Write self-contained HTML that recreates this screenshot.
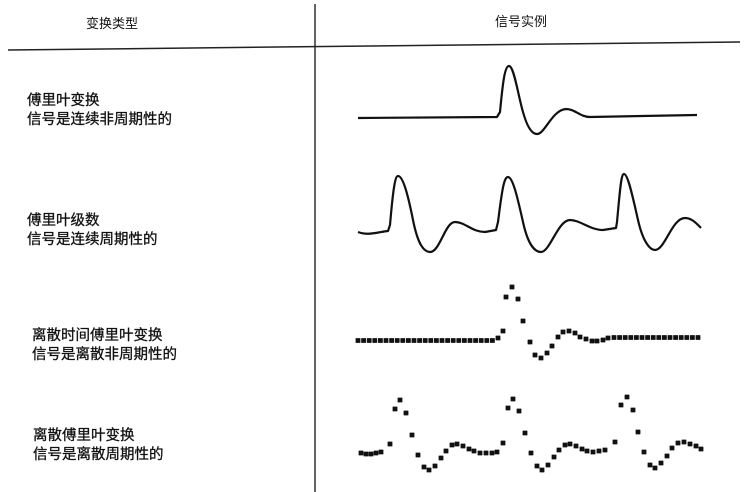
<!DOCTYPE html>
<html><head><meta charset="utf-8"><style>
body{margin:0;background:#fff;width:749px;height:492px;overflow:hidden}
svg{display:block}
text{font-family:"Liberation Sans","Noto Sans CJK SC",sans-serif;font-size:14.5px;fill:#111;stroke:#111;stroke-width:0.3}
</style></head><body>
<svg width="749" height="492" viewBox="0 0 749 492">
<line x1="315" y1="4" x2="315" y2="492" stroke="#222" stroke-width="1.4"/>
<line x1="8" y1="50" x2="740" y2="42" stroke="#222" stroke-width="1.5"/>
<text x="86" y="28" style="font-size:13px;stroke-width:0">变换类型</text>
<text x="495" y="26" style="font-size:13px;stroke-width:0">信号实例</text>
<text x="27" y="105">傅里叶变换</text>
<text x="27" y="124">信号是连续非周期性的</text>
<text x="27" y="225">傅里叶级数</text>
<text x="27" y="244">信号是连续周期性的</text>
<text x="32" y="340">离散时间傅里叶变换</text>
<text x="32" y="359">信号是离散非周期性的</text>
<text x="33" y="440">离散傅里叶变换</text>
<text x="33" y="459">信号是离散周期性的</text>
<g fill="none" stroke="#111" stroke-width="2.2" stroke-linejoin="round">
<path d="M358 118 L497 117 L500 112 C503 80 505 66 509 66 C514 66 518 95 523 112 C528 130 533 134 537 134 C545 134 552 110 566 109 C575 109 580 117 590 117 L697 115"/>
<path d="M358 232 C368 236 378 232 388 231 L390 225 C393 190 395 176 398 176 C403 176 408 195 413 220 C418 245 424 252 430 252 C440 252 445 222 455 222 C465 222 472 232 485 232 L496 230 L498 222 C502 190 504 177 508 177 C513 177 518 200 523 222 C528 245 535 252 541 252 C550 252 558 220 570 220 C580 220 590 230 603 230 L616 228 L617 222 C620 190 621 174 624 174 C628 174 633 198 638 220 C643 242 650 250 655 250 C665 250 672 218 685 218 C692 218 697 224 701 228"/>
</g>
<path fill="#111" stroke="#111" stroke-width="0.8" stroke-linejoin="round" d="
M356 338.5h4v4h-4z M361.6 338.5h4v4h-4z M367.2 338.5h4v4h-4z M372.8 338.5h4v4h-4z M378.4 338.5h4v4h-4z M384 338.5h4v4h-4z M389.6 338.5h4v4h-4z M395.2 338.5h4v4h-4z M400.8 338.5h4v4h-4z M406.4 338.5h4v4h-4z M412 338.5h4v4h-4z M417.6 338.5h4v4h-4z M423.2 338.5h4v4h-4z M428.8 338.5h4v4h-4z M434.4 338.5h4v4h-4z M440 338.5h4v4h-4z M445.6 338.5h4v4h-4z M451.2 338.5h4v4h-4z M456.8 338.5h4v4h-4z M462.4 338.5h4v4h-4z M468 338.5h4v4h-4z M473.6 338.5h4v4h-4z M479.2 338.5h4v4h-4z M484.8 338.5h4v4h-4z M490.4 338.5h4v4h-4z
M496 336h4v4h-4z M501 329h4v4h-4z M504 295h4v4h-4z M510 285h4v4h-4z M516 297h4v4h-4z M521 319h4v4h-4z M528 340h4v4h-4z M533 353h4v4h-4z M539 356h4v4h-4z M545 351h4v4h-4z M550 344h4v4h-4z M556 335h4v4h-4z M561 330h4v4h-4z M567 329h4v4h-4z M573 331h4v4h-4z M578 335h4v4h-4z M584 337h4v4h-4z M590 339h4v4h-4z M595 339h4v4h-4z M601 338h4v4h-4z M606 336h4v4h-4z
M612 335.5h4v4h-4z M617.6 335.5h4v4h-4z M623.2 335.5h4v4h-4z M628.8 335.5h4v4h-4z M634.4 335.5h4v4h-4z M640 335.5h4v4h-4z M645.6 335.5h4v4h-4z M651.2 335.5h4v4h-4z M656.8 335.5h4v4h-4z M662.4 335.5h4v4h-4z M668 335.5h4v4h-4z M673.6 335.5h4v4h-4z M679.2 335.5h4v4h-4z M684.8 335.5h4v4h-4z M690.4 335.5h4v4h-4z M696 335.5h4v4h-4z
M359 451h4v4h-4z M364 452h4v4h-4z M369 452h4v4h-4z M374 451h4v4h-4z M379 450h4v4h-4z M388 442h4v4h-4z M393 407h4v4h-4z M398 398h4v4h-4z M404 411h4v4h-4z M410 433h4v4h-4z M416 453h4v4h-4z M422 465h4v4h-4z M427 468h4v4h-4z M433 464h4v4h-4z M439 456h4v4h-4z M444 449h4v4h-4z M450 443h4v4h-4z M455 442h4v4h-4z M461 444h4v4h-4z M467 447h4v4h-4z M472 449h4v4h-4z M478 451h4v4h-4z M484 451h4v4h-4z M490 451h4v4h-4z M495 450h4v4h-4z
M501 441h4v4h-4z M506 406h4v4h-4z M511 397h4v4h-4z M517 409h4v4h-4z M523 431h4v4h-4z M529 451h4v4h-4z M535 464h4v4h-4z M540 468h4v4h-4z M546 463h4v4h-4z M552 455h4v4h-4z M557 448h4v4h-4z M563 443h4v4h-4z M568 442h4v4h-4z M574 444h4v4h-4z M580 447h4v4h-4z M585 449h4v4h-4z M591 450h4v4h-4z M597 449h4v4h-4z M603 448h4v4h-4z
M613 440h4v4h-4z M619 403h4v4h-4z M625 395h4v4h-4z M631 408h4v4h-4z M636 430h4v4h-4z M642 450h4v4h-4z M648 463h4v4h-4z M653 466h4v4h-4z M659 461h4v4h-4z M665 454h4v4h-4z M670 446h4v4h-4z M676 441h4v4h-4z M682 440h4v4h-4z M688 442h4v4h-4z M694 444h4v4h-4z M699 447h4v4h-4z"/>
</svg>
</body></html>
